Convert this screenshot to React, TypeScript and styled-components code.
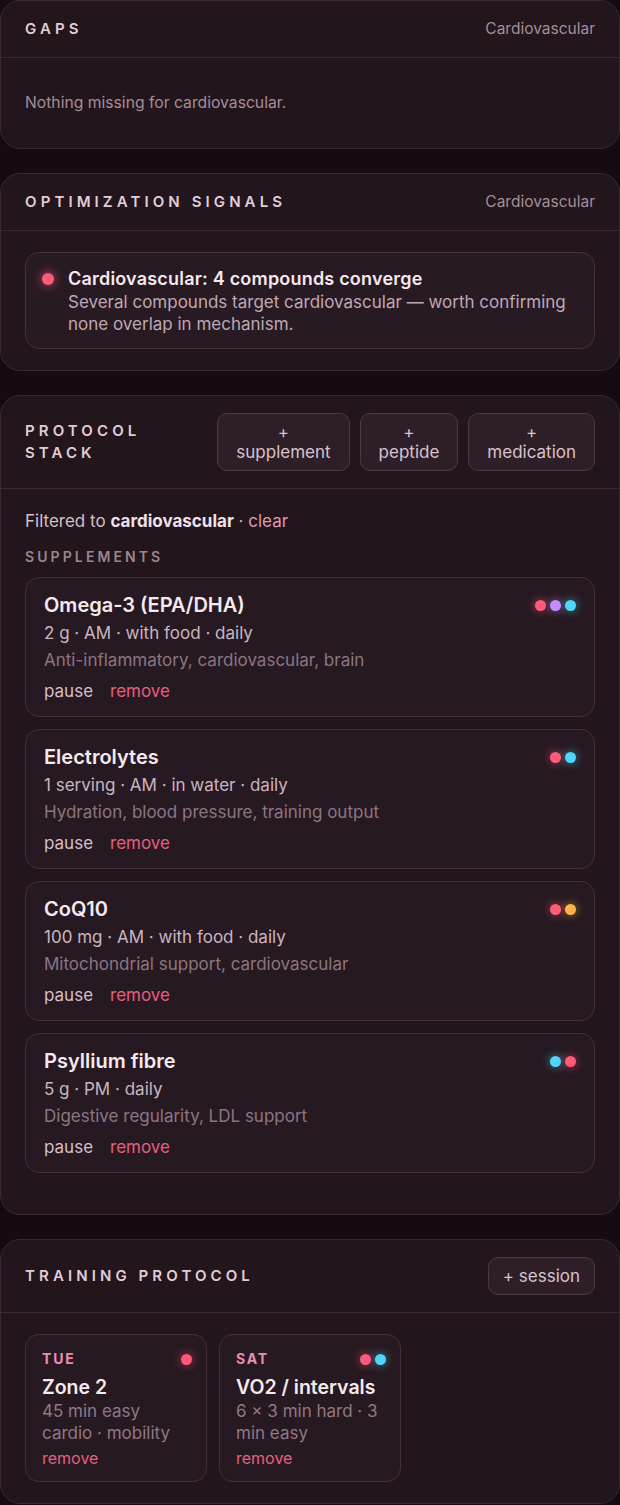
import React from 'react'
import styled, {createGlobalStyle} from 'styled-components'

const GlobalStyle = createGlobalStyle`
  html, body {
    margin: 0;
    padding: 0;
    background: #150b11;
  }
  body {
    font-family: Inter, "Noto Sans", sans-serif;
    color: #f3e6ec;
    -webkit-font-smoothing: antialiased;
  }
  * { box-sizing: border-box; }
`

const COLORS: Record<string, string> = {
  red: '#ff5a78',
  purple: '#c48cff',
  cyan: '#4fd6fa',
  amber: '#ffb347',
}

const supplements = [
  {name: 'Omega-3 (EPA/DHA)', meta: '2 g · AM · with food · daily', desc: 'Anti-inflammatory, cardiovascular, brain', dots: ['red', 'purple', 'cyan']},
  {name: 'Electrolytes', meta: '1 serving · AM · in water · daily', desc: 'Hydration, blood pressure, training output', dots: ['red', 'cyan']},
  {name: 'CoQ10', meta: '100 mg · AM · with food · daily', desc: 'Mitochondrial support, cardiovascular', dots: ['red', 'amber']},
  {name: 'Psyllium fibre', meta: '5 g · PM · daily', desc: 'Digestive regularity, LDL support', dots: ['cyan', 'red']},
]

const sessions = [
  {day: 'TUE', name: 'Zone 2', desc: '45 min easy cardio · mobility', dots: ['red']},
  {day: 'SAT', name: 'VO2 / intervals', desc: '6 × 3 min hard · 3 min easy', dots: ['red', 'cyan']},
]

function Dots({list}: {list: string[]}) {
  return (
    <DotRow>
      {list.map((c, i) => <Dot key={i} $color={COLORS[c]} />)}
    </DotRow>
  )
}

export default function App() {
  return (
    <Page>
      <GlobalStyle />

      <Card>
        <Header>
          <Title>Gaps</Title>
          <Context>Cardiovascular</Context>
        </Header>
        <Body>
          <Empty>Nothing missing for cardiovascular.</Empty>
        </Body>
      </Card>

      <Card>
        <Header>
          <Title>Optimization signals</Title>
          <Context>Cardiovascular</Context>
        </Header>
        <Body>
          <Signal>
            <SignalDot />
            <div>
              <SignalTitle>Cardiovascular: 4 compounds converge</SignalTitle>
              <SignalText>Several compounds target cardiovascular — worth confirming none overlap in mechanism.</SignalText>
            </div>
          </Signal>
        </Body>
      </Card>

      <Card>
        <Header>
          <Title>Protocol<br />stack</Title>
          <Buttons>
            <AddButton><span>+</span><span>supplement</span></AddButton>
            <AddButton><span>+</span><span>peptide</span></AddButton>
            <AddButton><span>+</span><span>medication</span></AddButton>
          </Buttons>
        </Header>
        <Body>
          <Filter>Filtered to <strong>cardiovascular</strong> <ClearLink>· clear</ClearLink></Filter>
          <Section>
            <SectionLabel>Supplements</SectionLabel>
            <ItemList>
              {supplements.map(s => (
                <Item key={s.name}>
                  <ItemTop>
                    <ItemName>{s.name}</ItemName>
                    <Dots list={s.dots} />
                  </ItemTop>
                  <Meta>{s.meta}</Meta>
                  <Desc>{s.desc}</Desc>
                  <Actions>
                    <Action>pause</Action>
                    <Action $danger>remove</Action>
                  </Actions>
                </Item>
              ))}
            </ItemList>
          </Section>
        </Body>
      </Card>

      <Card>
        <Header>
          <Title>Training protocol</Title>
          <SessionButton>+ session</SessionButton>
        </Header>
        <Body>
          <SessionGrid>
            {sessions.map(s => (
              <Session key={s.day}>
                <ItemTop>
                  <Day>{s.day}</Day>
                  <Dots list={s.dots} />
                </ItemTop>
                <SessionName>{s.name}</SessionName>
                <SessionDesc>{s.desc}</SessionDesc>
                <Action $danger $small>remove</Action>
              </Session>
            ))}
          </SessionGrid>
        </Body>
      </Card>
    </Page>
  )
}

const Page = styled.div`
  display: flex;
  flex-direction: column;
  gap: 24px;
`
const Card = styled.section`
  background: #22151c;
  border: 1px solid #3a2832;
  border-radius: 20px;
  overflow: hidden;
`
const Header = styled.header`
  display: flex;
  align-items: center;
  justify-content: space-between;
  gap: 12px;
  padding: 17px 24px;
  border-bottom: 1px solid #3a2832;
`
const Title = styled.h2`
  margin: 0;
  font-size: 15px;
  line-height: 22px;
  font-weight: 600;
  letter-spacing: 4.1px;
  text-transform: uppercase;
  color: #e2cdd7;
`
const Context = styled.span`
  font-size: 15.5px;
  line-height: 20px;
  color: #a58e9a;
`
const Body = styled.div`
  padding: 21px 24px;
`
const Empty = styled.p`
  margin: 0;
  padding: 14px 0;
  font-size: 15.7px;
  line-height: 20px;
  color: #a58e9a;
`
const Signal = styled.div`
  display: flex;
  align-items: flex-start;
  gap: 14px;
  padding: 14px 16px 13px;
  border: 1px solid #45303b;
  border-radius: 14px;
  background: #281a23;
`
const SignalDot = styled.span`
  flex: none;
  width: 12px;
  height: 12px;
  margin-top: 6px;
  border-radius: 50%;
  background: #ff5a78;
  box-shadow: 0 0 8px 2px rgba(255, 90, 120, 0.45);
`
const SignalTitle = styled.div`
  font-size: 18px;
  line-height: 24px;
  font-weight: 600;
  letter-spacing: 0.2px;
  color: #f5e9ef;
`
const SignalText = styled.div`
  font-size: 17px;
  line-height: 22px;
  color: #bfa8b4;
`
const Buttons = styled.div`
  display: flex;
  gap: 10px;
  flex: none;
`
const AddButton = styled.button`
  display: flex;
  flex-direction: column;
  align-items: center;
  padding: 8px 18px;
  background: #2e1e28;
  border: 1px solid #4e3845;
  border-radius: 10px;
  font-family: inherit;
  font-size: 17px;
  line-height: 20px;
  color: #d8c2cd;
`
const SessionButton = styled(AddButton)`
  flex-direction: row;
  padding: 8px 14px;
`
const Filter = styled.p`
  margin: 0;
  padding-top: 1px;
  font-size: 17px;
  line-height: 20px;
  color: #d5bfca;

  strong {
    font-weight: 700;
    color: #f0e0e8;
  }
`
const ClearLink = styled.span`
  color: #dd9bb8;
`
const Section = styled.div`
  margin-top: 16px;
  margin-bottom: 20px;
`
const SectionLabel = styled.h3`
  margin: 0 0 10px;
  font-size: 14px;
  line-height: 20px;
  font-weight: 600;
  letter-spacing: 3.1px;
  text-transform: uppercase;
  color: #9c8591;
`
const ItemList = styled.div`
  display: flex;
  flex-direction: column;
  gap: 12px;
`
const Item = styled.article`
  padding: 14px 18px 14px;
  border: 1px solid #43303b;
  border-radius: 14px;
  background: #271921;
`
const ItemTop = styled.div`
  display: flex;
  justify-content: space-between;
  align-items: center;
`
const ItemName = styled.div`
  font-size: 20px;
  line-height: 26px;
  font-weight: 600;
  color: #f5e9ef;
`
const DotRow = styled.div`
  display: flex;
  gap: 4px;
`
const Dot = styled.span<{$color: string}>`
  width: 11px;
  height: 11px;
  border-radius: 50%;
  background: ${p => p.$color};
  box-shadow: 0 0 8px 1px ${p => p.$color}77;
`
const Meta = styled.div`
  margin-top: 4px;
  font-size: 17px;
  line-height: 22px;
  color: #cbb5c0;
`
const Desc = styled.div`
  margin-top: 5px;
  font-size: 17px;
  line-height: 22px;
  color: #8c7581;
`
const Actions = styled.div`
  display: flex;
  gap: 17px;
  margin-top: 9px;
`
const Action = styled.span<{$danger?: boolean; $small?: boolean}>`
  font-size: ${p => p.$small ? '16px' : '17px'};
  line-height: 22px;
  color: ${p => p.$danger ? '#e5607f' : '#d5bfca'};
`
const SessionGrid = styled.div`
  display: grid;
  grid-template-columns: repeat(3, 1fr);
  gap: 12px;
`
const Session = styled.article`
  display: flex;
  flex-direction: column;
  padding: 13px 14px 12px 16px;
  border: 1px solid #43303b;
  border-radius: 14px;
  background: #271921;
`
const Day = styled.span`
  font-size: 14px;
  line-height: 22px;
  font-weight: 700;
  letter-spacing: 1.8px;
  color: #e88fb0;
`
const SessionName = styled.div`
  margin-top: 4px;
  font-size: 19.5px;
  line-height: 26px;
  font-weight: 600;
  color: #f5e9ef;
`
const SessionDesc = styled.div`
  font-size: 17px;
  line-height: 22px;
  color: #8f7884;
  margin-bottom: 3px;
`
